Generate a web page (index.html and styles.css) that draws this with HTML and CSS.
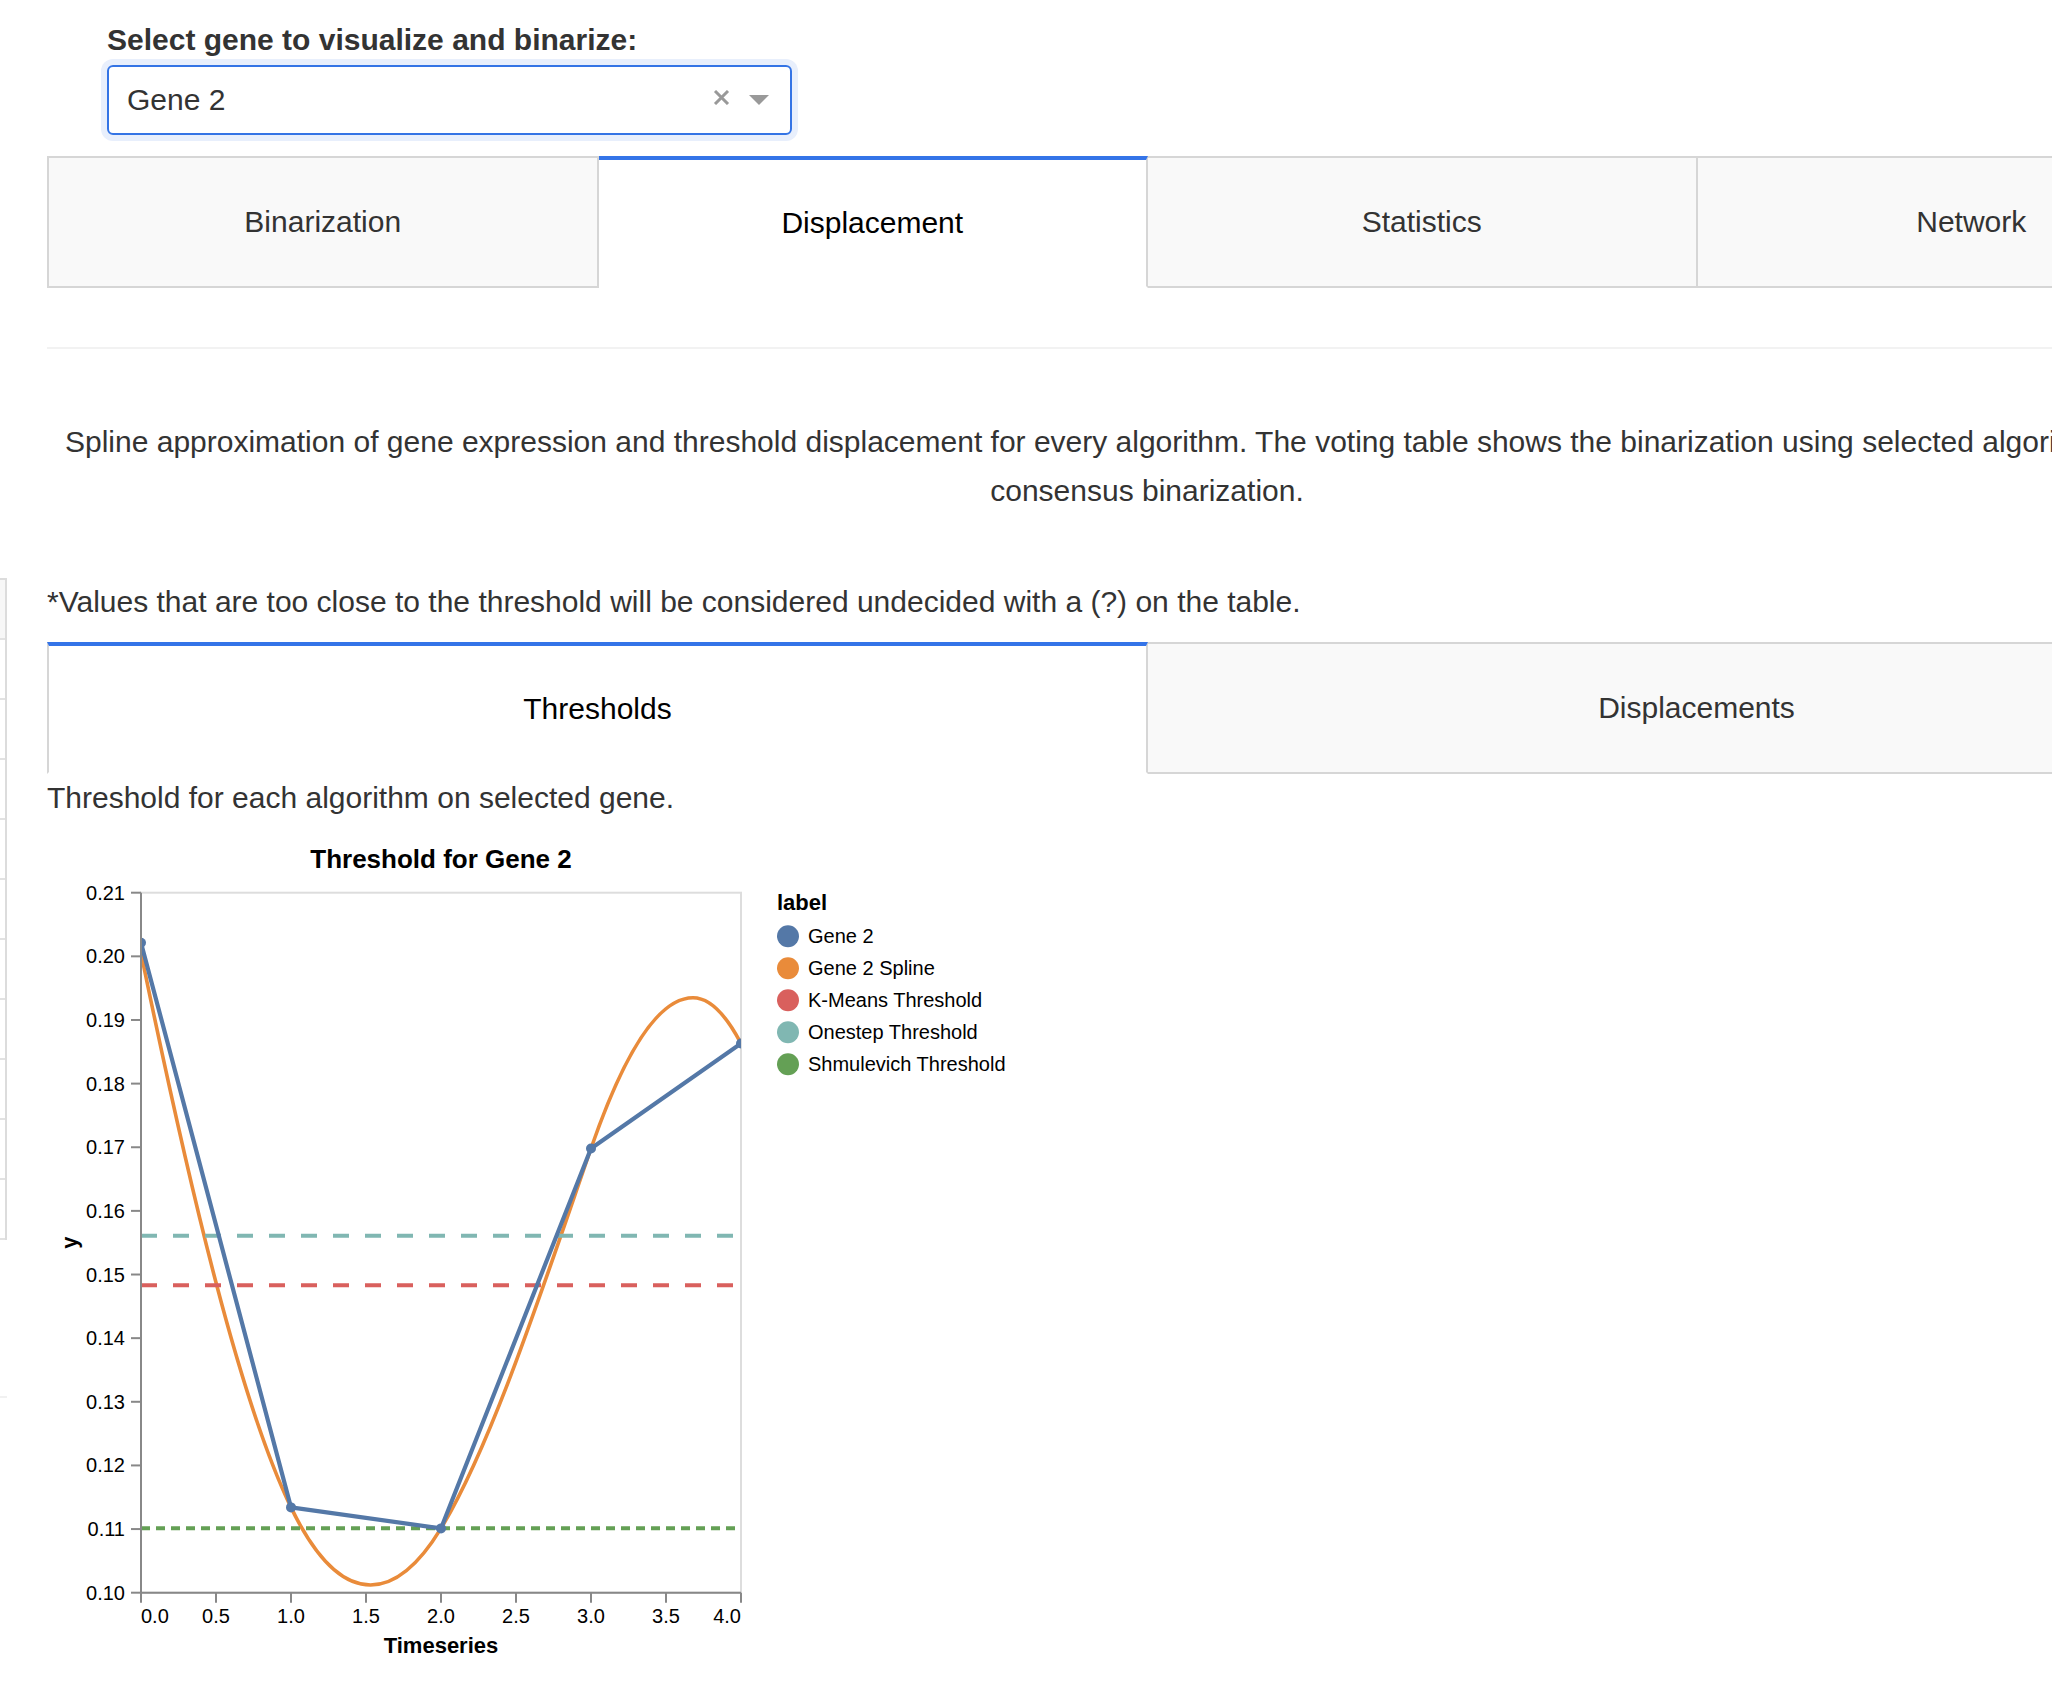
FILE: index.html
```html
<!DOCTYPE html>
<html lang="en">
<head>
<meta charset="utf-8">
<title>Displacement</title>
<link rel="stylesheet" href="styles.css">
</head>
<body>
<div class="side-strip">
  <div class="side-row head"></div>
  <div class="side-row"></div>
  <div class="side-row"></div>
  <div class="side-row"></div>
  <div class="side-row"></div>
  <div class="side-row"></div>
  <div class="side-row"></div>
  <div class="side-row"></div>
  <div class="side-row"></div>
  <div class="side-row"></div>
  <div class="side-row"></div>
</div>
<div class="side-mark"></div>

<main class="page">
  <label class="select-label">Select gene to visualize and binarize:</label>
  <div class="select-box">
    <span class="select-value">Gene 2</span>
    <svg class="select-clear" width="17" height="15" viewBox="0 0 17 15">
      <path d="M2 1 L15 14 M15 1 L2 14" stroke="#999" stroke-width="3" stroke-linecap="butt" fill="none"/>
    </svg>
    <span class="select-arrow"></span>
  </div>

  <div class="tabs">
    <div class="tab">Binarization</div>
    <div class="tab active">Displacement</div>
    <div class="tab">Statistics</div>
    <div class="tab">Network</div>
  </div>

  <hr class="divider">

  <p class="desc">Spline approximation of gene expression and threshold displacement for every algorithm. The voting table shows the binarization using selected algorithms and the consensus binarization.</p>

  <p class="note">*Values that are too close to the threshold will be considered undecided with a (?) on the table.</p>

  <div class="tabs sub-tabs">
    <div class="tab active">Thresholds</div>
    <div class="tab">Displacements</div>
  </div>

  <p class="caption">Threshold for each algorithm on selected gene.</p>

  <svg class="chart" width="1000" height="860" viewBox="0 0 1000 860">
    <defs>
      <clipPath id="plotclip"><rect x="0" y="0" width="600" height="700"/></clipPath>
    </defs>
    <g transform="translate(94,73.7)">
      <text class="chart-title" x="300" y="-24.7" text-anchor="middle">Threshold for Gene 2</text>
      <rect class="view" x="0" y="0" width="600" height="700"/>

      <g clip-path="url(#plotclip)">
        <path class="spline" d="M0,60.4 C50,303.5 100,511.05 150,614.7 C176.5,669.6 203,692.3 229.5,692.3 C253,692.3 276.5,674.4 300,635.7 C350,553.4 400,400.05 450,255.8 C484,157.7 518,105 552,105 C568,105 584,120.3 600,150.8"/>
        <line class="th-kmeans" x1="0" x2="600" y1="392.6" y2="392.6"/>
        <line class="th-onestep" x1="0" x2="600" y1="343" y2="343"/>
        <line class="th-shmul" x1="0" x2="600" y1="635.6" y2="635.6"/>
        <polyline class="gene" points="0,50 150,614.7 300,635.7 450,255.8 600,150.8"/>
        <circle class="pt" cx="0" cy="50" r="5"/>
        <circle class="pt" cx="150" cy="614.7" r="5"/>
        <circle class="pt" cx="300" cy="635.7" r="5"/>
        <circle class="pt" cx="450" cy="255.8" r="5"/>
        <circle class="pt" cx="600" cy="150.8" r="5"/>
      </g>

      <!-- y axis -->
      <g class="axis">
        <line x1="0" y1="0" x2="0" y2="700"/>
        <line x1="-10" x2="0" y1="0" y2="0"/>
        <line x1="-10" x2="0" y1="63.64" y2="63.64"/>
        <line x1="-10" x2="0" y1="127.27" y2="127.27"/>
        <line x1="-10" x2="0" y1="190.91" y2="190.91"/>
        <line x1="-10" x2="0" y1="254.55" y2="254.55"/>
        <line x1="-10" x2="0" y1="318.18" y2="318.18"/>
        <line x1="-10" x2="0" y1="381.82" y2="381.82"/>
        <line x1="-10" x2="0" y1="445.45" y2="445.45"/>
        <line x1="-10" x2="0" y1="509.09" y2="509.09"/>
        <line x1="-10" x2="0" y1="572.73" y2="572.73"/>
        <line x1="-10" x2="0" y1="636.36" y2="636.36"/>
        <line x1="-10" x2="0" y1="700" y2="700"/>
      </g>
      <g class="ax-label" text-anchor="end">
        <text x="-16" y="7">0.21</text>
        <text x="-16" y="70.64">0.20</text>
        <text x="-16" y="134.27">0.19</text>
        <text x="-16" y="197.91">0.18</text>
        <text x="-16" y="261.55">0.17</text>
        <text x="-16" y="325.18">0.16</text>
        <text x="-16" y="388.82">0.15</text>
        <text x="-16" y="452.45">0.14</text>
        <text x="-16" y="516.09">0.13</text>
        <text x="-16" y="579.73">0.12</text>
        <text x="-16" y="643.36">0.11</text>
        <text x="-16" y="707">0.10</text>
      </g>
      <text class="ax-title" transform="translate(-64,350) rotate(-90)" text-anchor="middle">y</text>

      <!-- x axis -->
      <g class="axis">
        <line x1="0" y1="700" x2="600" y2="700"/>
        <line x1="0" x2="0" y1="700" y2="710"/>
        <line x1="75" x2="75" y1="700" y2="710"/>
        <line x1="150" x2="150" y1="700" y2="710"/>
        <line x1="225" x2="225" y1="700" y2="710"/>
        <line x1="300" x2="300" y1="700" y2="710"/>
        <line x1="375" x2="375" y1="700" y2="710"/>
        <line x1="450" x2="450" y1="700" y2="710"/>
        <line x1="525" x2="525" y1="700" y2="710"/>
        <line x1="600" x2="600" y1="700" y2="710"/>
      </g>
      <g class="ax-label" text-anchor="middle">
        <text x="0" y="730.3" text-anchor="start">0.0</text>
        <text x="75" y="730.3">0.5</text>
        <text x="150" y="730.3">1.0</text>
        <text x="225" y="730.3">1.5</text>
        <text x="300" y="730.3">2.0</text>
        <text x="375" y="730.3">2.5</text>
        <text x="450" y="730.3">3.0</text>
        <text x="525" y="730.3">3.5</text>
        <text x="600" y="730.3" text-anchor="end">4.0</text>
      </g>
      <text class="ax-title" x="300" y="760.3" text-anchor="middle">Timeseries</text>

      <!-- legend -->
      <g class="legend">
        <text class="legend-title" x="636" y="17.3">label</text>
        <circle class="sw-gene" cx="647" cy="43.5" r="11"/>
        <text class="legend-label" x="667" y="50.5">Gene 2</text>
        <circle class="sw-spline" cx="647" cy="75.5" r="11"/>
        <text class="legend-label" x="667" y="82.5">Gene 2 Spline</text>
        <circle class="sw-kmeans" cx="647" cy="107.5" r="11"/>
        <text class="legend-label" x="667" y="114.5">K-Means Threshold</text>
        <circle class="sw-onestep" cx="647" cy="139.5" r="11"/>
        <text class="legend-label" x="667" y="146.5">Onestep Threshold</text>
        <circle class="sw-shmul" cx="647" cy="171.5" r="11"/>
        <text class="legend-label" x="667" y="178.5">Shmulevich Threshold</text>
      </g>
    </g>
  </svg>
</main>
</body>
</html>
```

FILE: styles.css
```css
html, body {
  margin: 0;
  padding: 0;
  background: #ffffff;
  overflow: hidden;
}

body {
  position: relative;
  width: 2052px;
  height: 1690px;
  font-family: "Liberation Sans", Arial, Helvetica, sans-serif;
  color: #333333;
}

/* partially visible table at the left edge */
.side-strip {
  position: absolute;
  left: 0;
  top: 578px;
  width: 5px;
  border-right: 2px solid #dcdcdc;
  border-top: 2px solid #dcdcdc;
}

.side-row {
  height: 58px;
  border-bottom: 2px solid #e2e2e2;
}

.side-row.head {
  background: #f7f7f7;
}

.side-mark {
  position: absolute;
  left: 0;
  top: 1396px;
  width: 7px;
  height: 2px;
  background: #f1f1f1;
}

.page {
  margin-left: 47px;
  width: 2200px;
}

/* gene selector */
.select-label {
  display: block;
  margin-left: 60px;
  padding-top: 22px;
  font-size: 30px;
  line-height: 36px;
  font-weight: bold;
  color: #333333;
}

.select-box {
  margin: 7px 0 0 60px;
  width: 685px;
  height: 70px;
  box-sizing: border-box;
  border: 2px solid #3474e5;
  border-radius: 6px;
  box-shadow: 0 0 0 6px #e8effc;
  display: flex;
  align-items: center;
  padding: 0 21px 0 18px;
  font-size: 30px;
  color: #333333;
}

.select-value {
  flex: 1;
}

.select-clear {
  display: block;
  margin-top: -5px;
}

.select-arrow {
  display: block;
  width: 0;
  height: 0;
  margin-left: 19px;
  margin-top: 4px;
  border-style: solid;
  border-width: 10px 10px 5px;
  border-color: #999999 transparent transparent;
}

/* tabs */
.tabs {
  display: flex;
  margin-top: 21px;
}

.tab {
  flex: 1 1 0;
  height: 132px;
  box-sizing: border-box;
  display: flex;
  align-items: center;
  justify-content: center;
  background: #f9f9f9;
  border: 2px solid #d6d6d6;
  border-left: none;
  font-size: 30px;
  color: #333333;
}

.tab:first-child {
  border-left: 2px solid #d6d6d6;
}

.tab.active {
  background: #ffffff;
  color: #000000;
  border-top: 4px solid #3474e8;
  border-bottom-color: #ffffff;
}

.sub-tabs {
  margin-top: 19px;
}

.divider {
  margin: 59px 0 0;
  border: 0;
  height: 2px;
  background: #f2f2f2;
}

.desc {
  margin: 68px 0 0;
  font-size: 30px;
  line-height: 49px;
  text-align: center;
}

.note {
  margin: 65px 0 0;
  font-size: 30px;
  line-height: 43px;
}

.caption {
  margin: 2px 0 0;
  font-size: 30px;
  line-height: 43px;
}

/* chart */
.chart {
  display: block;
  font-family: "Liberation Sans", Arial, Helvetica, sans-serif;
}

.chart-title {
  font-size: 26px;
  font-weight: bold;
  fill: #000000;
}

.view {
  fill: none;
  stroke: #dddddd;
  stroke-width: 2;
}

.axis line {
  stroke: #888888;
  stroke-width: 2;
}

.ax-label {
  font-size: 20px;
  fill: #000000;
}

.ax-title {
  font-size: 22px;
  font-weight: bold;
  fill: #000000;
}

.spline {
  fill: none;
  stroke: #e98b3a;
  stroke-width: 3.6;
}

.gene {
  fill: none;
  stroke: #5478a7;
  stroke-width: 4.2;
  stroke-linejoin: round;
}

.pt {
  fill: #5478a7;
}

.th-kmeans {
  stroke: #d9605d;
  stroke-width: 4;
  stroke-dasharray: 16 16;
}

.th-onestep {
  stroke: #80b7b2;
  stroke-width: 4;
  stroke-dasharray: 16 16;
}

.th-shmul {
  stroke: #64a055;
  stroke-width: 4;
  stroke-dasharray: 9 6;
}

.legend-title {
  font-size: 22px;
  font-weight: bold;
  fill: #000000;
}

.legend-label {
  font-size: 20px;
  fill: #000000;
}

.sw-gene { fill: #5478a7; }
.sw-spline { fill: #e98b3a; }
.sw-kmeans { fill: #d9605d; }
.sw-onestep { fill: #80b7b2; }
.sw-shmul { fill: #64a055; }
```
